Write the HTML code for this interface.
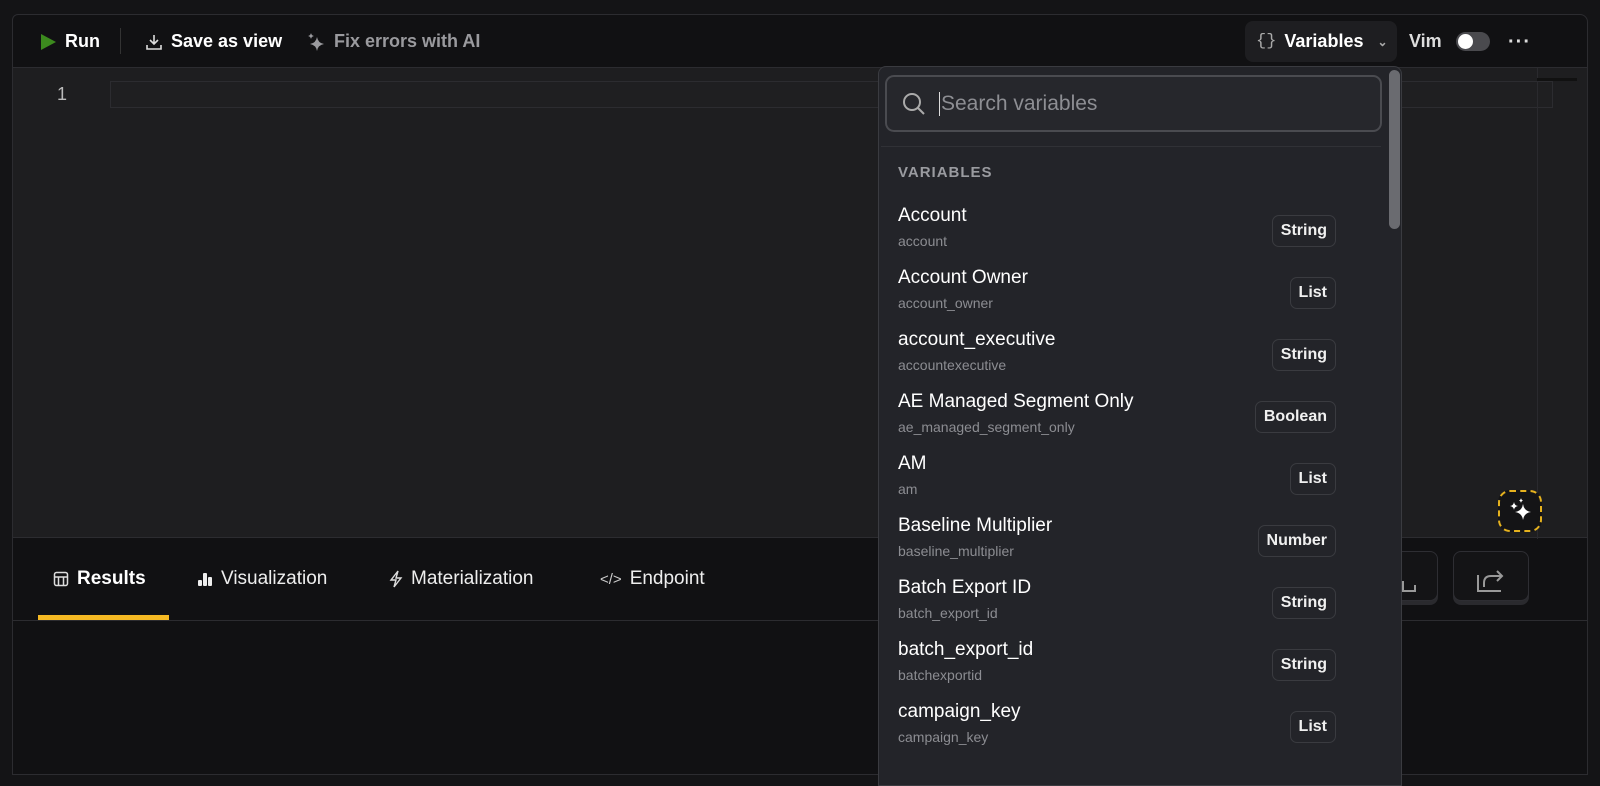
<!DOCTYPE html>
<html><head><meta charset="utf-8"><style>
*{box-sizing:border-box;margin:0;padding:0}
body{width:1600px;height:775px;overflow:hidden;background:#141416;font-family:"Liberation Sans",sans-serif;position:relative;color:#fff}
.abs{position:absolute}
.panel{left:12px;top:14px;width:1576px;height:761px;background:#111113;border:1px solid #2c2c30;border-radius:6px 8px 0 0;overflow:hidden}
.tb{font-size:18px;font-weight:bold;top:6px;height:41px;display:flex;align-items:center;gap:8px}
.editor{left:0;top:52px;width:1576px;height:471px;background:#1e1e20;border-top:1px solid #2c2c30;border-bottom:1px solid #2c2c30}
.tab{top:553px;font-size:19px;display:flex;align-items:center;gap:8px;color:#eee}
.dd{left:878px;top:66px;width:524px;height:720px;background:#232429;border:1px solid #3a3b40;border-radius:8px 8px 0 0}
.row{position:absolute;left:19px;width:438px;height:62px}
.nm{position:absolute;left:0;top:0;font-size:19px;color:#fff}
.sb{position:absolute;left:0;top:28px;font-size:14px;color:#8c8d92}
.bd{position:absolute;right:0;top:10px;height:32px;border:1px solid #3a3b40;border-radius:7px;padding:0 8px;font-size:16px;font-weight:bold;line-height:30px;color:#f0f0f0}
.btn{border:1px solid #2e2e33;border-radius:8px;background:#141416;box-shadow:0 4px 0 #2a2a2e}
</style></head><body>
<div class="abs panel">
  <div class="abs tb" style="left:26px"><svg width="18" height="20"><path d="M2 2L17 10L2 18Z" fill="#3c8a1e"/></svg>Run</div>
  <div class="abs" style="left:107px;top:13px;width:1px;height:26px;background:#333"></div>
  <div class="abs tb" style="left:132px"><svg width="18" height="18" fill="none" stroke="#ddd" stroke-width="1.6"><path d="M9 2V11M5 7L9 11L13 7M2 12V16H16V12"/></svg>Save as view</div>
  <div class="abs tb" style="left:293px;color:#9a9a9e"><svg width="20" height="20" fill="#9a9a9e"><path d="M11 5Q12 11 18 12Q12 13 11 19Q10 13 4 12Q10 11 11 5Z"/><path d="M5 1Q5.5 3.5 8 4Q5.5 4.5 5 7Q4.5 4.5 2 4Q4.5 3.5 5 1Z"/></svg>Fix errors with AI</div>
  <div class="abs" style="left:1232px;top:6px;width:152px;height:41px;background:#1e1e21;border-radius:8px"></div>
  <div class="abs tb" style="left:1243px"><span style="color:#aaa;font-weight:normal;font-family:'Liberation Mono';font-size:17px">{}</span>Variables<span style="color:#aaa;font-size:12px;margin-left:6px">&#8964;</span></div>
  <div class="abs tb" style="left:1396px;color:#ddd">Vim</div>
  <div class="abs" style="left:1443px;top:17px;width:34px;height:19px;border-radius:10px;background:#4a4a4e"><div style="margin:2px;width:15px;height:15px;border-radius:50%;background:#fff"></div></div>
  <div class="abs" style="left:1495px;top:16px;font-size:20px;font-weight:bold;color:#ddd;letter-spacing:1px">···</div>
  <div class="abs editor">
    <div class="abs" style="left:44px;top:16px;font-size:18px;color:#bbb">1</div>
    <div class="abs" style="left:97px;top:13px;width:1443px;height:27px;border:1px solid #2c2c30;background:#1f1f21"></div>
    <div class="abs" style="left:1524px;top:0;width:1px;height:471px;background:#2a2a2e"></div>
    <div class="abs" style="left:1524px;top:10px;width:40px;height:3px;background:#111"></div>
    <div class="abs" style="left:1485px;top:422px;width:44px;height:42px;border:2px dashed #e6b21e;border-radius:12px;background:#141416"></div>
    <svg class="abs" style="left:1495px;top:430px" width="26" height="26" fill="#fff"><path d="M15 6Q16 13 23 14Q16 15 15 22Q14 15 7 14Q14 13 15 6Z"/><path d="M6 4Q6.5 7.5 10 8Q6.5 8.5 6 12Q5.5 8.5 2 8Q5.5 7.5 6 4Z"/><path d="M13 0Q13.3 2 15 2.5Q13.3 3 13 5Q12.7 3 11 2.5Q12.7 2 13 0Z"/></svg>
  </div>
  <div class="abs tab" style="left:40px;font-weight:bold;color:#fff"><svg width="16" height="16" fill="none" stroke="#ddd" stroke-width="1.5"><rect x="1.5" y="1.5" width="13" height="13" rx="2"/><path d="M1.5 6H14.5M5.5 6V14.5M10.5 6V14.5"/></svg>Results</div>
  <div class="abs tab" style="left:184px"><svg width="16" height="16" fill="#eee"><rect x="1" y="9" width="4" height="6" rx="1"/><rect x="6" y="2" width="4" height="13" rx="1"/><rect x="11" y="6" width="4" height="9" rx="1"/></svg>Visualization</div>
  <div class="abs tab" style="left:376px"><svg width="14" height="18" fill="none" stroke="#ddd" stroke-width="1.4"><path d="M9 1L2 10H7L5 17L12 8H7Z"/></svg>Materialization</div>
  <div class="abs tab" style="left:587px"><span style="font-size:15px;color:#ccc">&lt;/&gt;</span>Endpoint</div>
  <div class="abs" style="left:25px;top:600px;width:131px;height:5px;background:#f5b923"></div>
  <div class="abs" style="left:0;top:605px;width:1576px;height:1px;background:#2c2c30"></div>
  <div class="abs btn" style="left:1360px;top:536px;width:65px;height:50px"></div>
  <svg class="abs" style="left:1380px;top:556px" width="30" height="24" fill="none" stroke="#999" stroke-width="2"><path d="M10 10V20H22V14"/></svg>
  <div class="abs btn" style="left:1440px;top:536px;width:76px;height:50px"></div>
  <svg class="abs" style="left:1462px;top:552px" width="34" height="28" fill="none" stroke="#999" stroke-width="2"><path d="M3 8V24H26M9 20V16Q9 9 16 9H27M22 4L27 9L22 14"/></svg>
</div>
<div class="abs dd">
  <div class="abs" style="left:6px;top:8px;width:497px;height:57px;border:2px solid #4a4b50;border-radius:9px;background:#26272c"></div>
  <svg class="abs" style="left:22px;top:24px" width="28" height="28" fill="none" stroke="#aaa" stroke-width="2"><circle cx="11" cy="11" r="8"/><path d="M17 17L23 23"/></svg>
  <div class="abs" style="left:60px;top:25px;width:1px;height:24px;background:#ddd"></div>
  <div class="abs" style="left:62px;top:25px;font-size:21px;color:#8d8e93">Search variables</div>
  <div class="abs" style="left:2px;top:79px;width:500px;height:1px;background:#303136"></div>
  <div class="abs" style="left:510px;top:3px;width:11px;height:159px;background:#6a6b70;border-radius:6px"></div>
  <div class="abs" style="left:19px;top:97px;font-size:15px;font-weight:bold;color:#9a9ba0;letter-spacing:1px">VARIABLES</div>
  <div class="row" style="top:138px"><div class="nm">Account</div><div class="sb">account</div><div class="bd">String</div></div>
  <div class="row" style="top:200px"><div class="nm">Account Owner</div><div class="sb">account_owner</div><div class="bd">List</div></div>
  <div class="row" style="top:262px"><div class="nm">account_executive</div><div class="sb">accountexecutive</div><div class="bd">String</div></div>
  <div class="row" style="top:324px"><div class="nm">AE Managed Segment Only</div><div class="sb">ae_managed_segment_only</div><div class="bd">Boolean</div></div>
  <div class="row" style="top:386px"><div class="nm">AM</div><div class="sb">am</div><div class="bd">List</div></div>
  <div class="row" style="top:448px"><div class="nm">Baseline Multiplier</div><div class="sb">baseline_multiplier</div><div class="bd">Number</div></div>
  <div class="row" style="top:510px"><div class="nm">Batch Export ID</div><div class="sb">batch_export_id</div><div class="bd">String</div></div>
  <div class="row" style="top:572px"><div class="nm">batch_export_id</div><div class="sb">batchexportid</div><div class="bd">String</div></div>
  <div class="row" style="top:634px"><div class="nm">campaign_key</div><div class="sb">campaign_key</div><div class="bd">List</div></div>
</div>
</body></html>
